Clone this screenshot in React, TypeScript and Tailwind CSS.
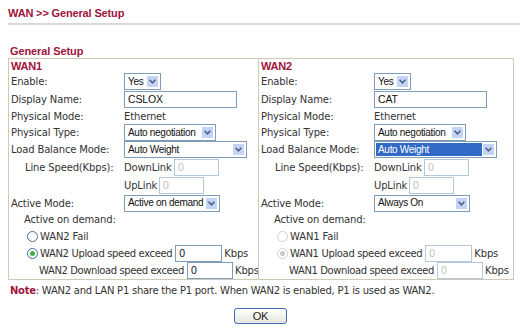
import React from "react";

const F = { fontFamily: '"DejaVu Sans", Verdana, sans-serif' };
const FS = { fontFamily: '"Liberation Sans", Arial, sans-serif' };

function Arrow() {
  return (
    <div className="flex h-full w-[13px] shrink-0 items-center justify-center rounded-[1px] border border-white bg-[#c3d4f6]">
      <svg width="7" height="5" viewBox="0 0 7 5">
        <path d="M0.6 0.8 L3.5 3.8 L6.4 0.8" fill="none" stroke="#4d6185" strokeWidth="1.6" />
      </svg>
    </div>
  );
}

function Select({ w, text, sel }: { w: string; text: string; sel?: boolean }) {
  return (
    <div className={`flex h-[17px] ${w} items-stretch border border-[#7f9db9] bg-white p-[1px] text-[10px] tracking-[-0.3px] text-[#111]`} style={FS}>
      <div className={`flex min-w-0 flex-1 items-center whitespace-nowrap pl-[2px] leading-none ${sel ? "bg-[#316ac5] text-white" : ""}`}>{text}</div>
      <Arrow />
    </div>
  );
}

function TextIn({ w, value, disabled }: { w: string; value: string; disabled?: boolean }) {
  return (
    <div
      className={`flex h-[17px] ${w} shrink-0 items-center border pl-[3px] text-[10.5px] leading-none ${disabled ? "border-[#b5c7dc] text-[#c0c0c0]" : "border-[#7f9db9] text-[#111]"} bg-white`}
      style={FS}
    >
      {value}
    </div>
  );
}

function Row({ h, label, indent, children }: { h: string; label?: string; indent?: boolean; children?: React.ReactNode }) {
  return (
    <div className={`flex ${h} items-center`}>
      <div className={`w-[113px] shrink-0 whitespace-nowrap ${indent ? "pl-[14px]" : ""}`}>{label}</div>
      <div className="flex items-center whitespace-nowrap">{children}</div>
    </div>
  );
}

function Radio({ checked, disabled }: { checked?: boolean; disabled?: boolean }) {
  return (
    <div
      className={`mr-[2px] flex h-[11px] w-[11px] shrink-0 items-center justify-center rounded-full border ${disabled ? "border-[#d0d0d0]" : "border-[#3c6ea5]"} bg-white`}
    >
      {checked && <div className={`h-[5px] w-[5px] rounded-full ${disabled ? "bg-[#c8c8c8]" : "bg-[#3cb043]"}`} />}
    </div>
  );
}

function Panel({ n, other, name, lbSel, mode, disabled, border }: { n: string; other: string; name: string; lbSel?: boolean; mode: string; disabled?: boolean; border?: boolean }) {
  return (
    <div className={`pl-[2px] ${border ? "flex-1 border-l border-[#cfcab8]" : "w-[249px]"}`}>
      <div className="flex h-[14px] items-center text-[11px] font-bold tracking-[-0.2px] text-[#a0143c]" style={FS}>{n}</div>
      <Row h="h-[17px]" label="Enable:"><Select w="w-[37px]" text="Yes" /></Row>
      <Row h="h-[18px]" label="Display Name:"><TextIn w="w-[113px]" value={name} /></Row>
      <Row h="h-[16px]" label="Physical Mode:"><span>Ethernet</span></Row>
      <Row h="h-[17px]" label="Physical Type:"><Select w="w-[92px]" text="Auto negotiation" /></Row>
      <Row h="h-[17px]" label="Load Balance Mode:"><Select w="w-[123px]" text="Auto Weight" sel={lbSel} /></Row>
      <Row h="h-[18px]" label="Line Speed(Kbps):" indent>
        <span className="w-[50px]">DownLink</span>
        <TextIn w="w-[45px]" value="0" disabled />
      </Row>
      <Row h="h-[18px]">
        <span className="w-[35px]">UpLink</span>
        <TextIn w="w-[45px]" value="0" disabled />
      </Row>
      <Row h="h-[18px]" label="Active Mode:"><Select w="w-[96px]" text={mode} /></Row>
      <div className="flex h-[15px] items-center pl-[13px]">Active on demand:</div>
      <div className="flex h-[18px] items-center whitespace-nowrap pl-[16px]">
        <Radio disabled={disabled} />
        <span>{other} Fail</span>
      </div>
      <div className="flex h-[17px] items-center whitespace-nowrap pl-[16px]">
        <Radio checked disabled={disabled} />
        <span className="mr-[3px] tracking-[-0.35px]">{other} Upload speed exceed</span>
        <TextIn w="w-[47px]" value="0" disabled={disabled} />
        <span className="ml-[2px]">Kbps</span>
      </div>
      <div className="flex h-[17px] items-center whitespace-nowrap pl-[28px]">
        <span className="mr-[3px] tracking-[-0.4px]">{other} Download speed exceed</span>
        <TextIn w="w-[46px]" value="0" disabled={disabled} />
        <span className="ml-[2px]">Kbps</span>
      </div>
    </div>
  );
}

export default function App() {
  return (
    <div className="h-[334px] w-[520px] overflow-hidden bg-white text-[10px] tracking-[-0.15px] text-[#333]" style={F}>
      <div className="pl-[8px] pt-[6px]">
        <div className="h-[14px] text-[11px] font-bold leading-[14px] text-[#a0143c]" style={FS}>
          WAN &gt;&gt; General Setup
        </div>
        <div className="mt-[3px] h-[2px] bg-[#d8d8d8]" />
        <div className="mt-[19px] h-[14px] pl-[2px] text-[11px] font-bold leading-[14px] tracking-[-0.1px] text-[#a0143c]" style={FS}>
          General Setup
        </div>
        <div className="flex w-[506px] border border-[#cfcab8]">
          <Panel n="WAN1" other="WAN2" name="CSLOX" mode="Active on demand" />
          <Panel n="WAN2" other="WAN1" name="CAT" lbSel mode="Always On" disabled border />
        </div>
        <div className="mt-[4px] h-[14px] whitespace-nowrap pl-[2px] leading-[14px] tracking-[-0.25px]">
          <span className="font-bold text-[#a0143c]">Note</span>: WAN2 and LAN P1 share the P1 port. When WAN2 is enabled, P1 is used as WAN2.
        </div>
        <div className="mt-[10px] flex justify-center pr-[7px]">
          <div className="flex h-[16px] w-[53px] items-center justify-center rounded-[3px] border border-[#3c6fb4] bg-gradient-to-b from-white to-[#e6e6de] text-[11px] text-[#222]" style={FS}>
            OK
          </div>
        </div>
      </div>
    </div>
  );
}
